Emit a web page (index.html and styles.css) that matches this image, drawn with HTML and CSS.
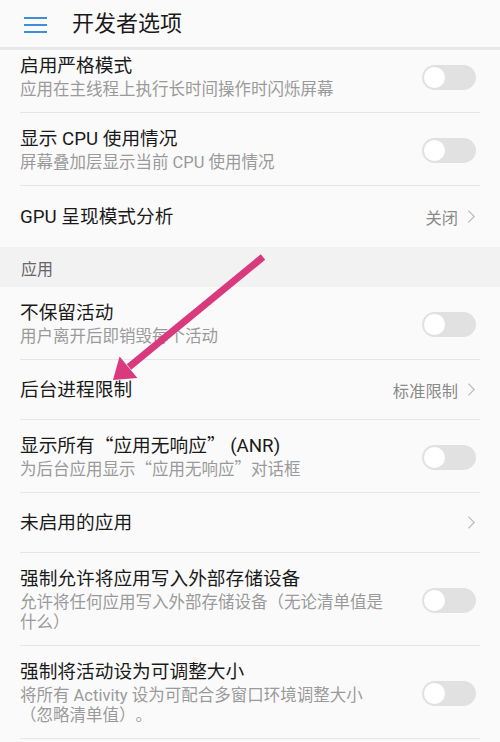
FILE: index.html
```html
<!DOCTYPE html>
<html lang="zh-CN">
<head>
  <meta charset="UTF-8">
  <meta name="viewport" content="width=device-width, initial-scale=1.0">
  <title>开发者选项</title>
  <link rel="stylesheet" href="styles.css">
</head>
<body>
  <div class="screen">
    <header class="topbar">
      <div class="menu-icon">
        <span></span><span></span><span></span>
      </div>
      <h1 class="title">开发者选项</h1>
    </header>

    <div class="content">
      <div class="list">
        <div class="group">
          <div class="item">
            <div class="text">
              <div class="label">启用严格模式</div>
              <div class="summary">应用在主线程上执行长时间操作时闪烁屏幕</div>
            </div>
            <div class="switch"></div>
          </div>
          <div class="item">
            <div class="text">
              <div class="label">显示 CPU 使用情况</div>
              <div class="summary">屏幕叠加层显示当前 CPU 使用情况</div>
            </div>
            <div class="switch"></div>
          </div>
          <div class="item single">
            <div class="text">
              <div class="label">GPU 呈现模式分析</div>
            </div>
            <div class="value">关闭</div>
            <svg class="chevron" viewBox="0 0 10 16"><polyline points="1.5,1.5 8,8 1.5,14.5"/></svg>
          </div>
        </div>

        <div class="section">应用</div>

        <div class="group">
          <div class="item">
            <div class="text">
              <div class="label">不保留活动</div>
              <div class="summary">用户离开后即销毁每个活动</div>
            </div>
            <div class="switch"></div>
          </div>
          <div class="item single">
            <div class="text">
              <div class="label">后台进程限制</div>
            </div>
            <div class="value">标准限制</div>
            <svg class="chevron" viewBox="0 0 10 16"><polyline points="1.5,1.5 8,8 1.5,14.5"/></svg>
          </div>
          <div class="item">
            <div class="text">
              <div class="label">显示所有<span class="cjk">“</span>应用无响应<span class="cjk">”</span> (ANR)</div>
              <div class="summary">为后台应用显示<span class="cjk">“</span>应用无响应<span class="cjk">”</span>对话框</div>
            </div>
            <div class="switch"></div>
          </div>
          <div class="item single">
            <div class="text">
              <div class="label">未启用的应用</div>
            </div>
            <svg class="chevron" viewBox="0 0 10 16"><polyline points="1.5,1.5 8,8 1.5,14.5"/></svg>
          </div>
          <div class="item">
            <div class="text">
              <div class="label">强制允许将应用写入外部存储设备</div>
              <div class="summary">允许将任何应用写入外部存储设备（无论清单值是什么）</div>
            </div>
            <div class="switch"></div>
          </div>
          <div class="item">
            <div class="text">
              <div class="label">强制将活动设为可调整大小</div>
              <div class="summary">将所有 Activity 设为可配合多窗口环境调整大小（忽略清单值）。</div>
            </div>
            <div class="switch"></div>
          </div>
        </div>
      </div>
    </div>

    <!-- annotation arrow drawn over the screenshot -->
    <svg class="arrow" viewBox="0 0 500 742">
      <line x1="263" y1="257" x2="129" y2="367" />
      <polygon points="113,380 119.6,356.5 137.4,378.1" />
    </svg>
  </div>
</body>
</html>
```

FILE: styles.css
```css
body {
  margin: 0;
  background-color: #fafafa;
  font-family: Roboto, "Noto Sans CJK SC", sans-serif;
  color: #1a1a1a;
  text-spacing-trim: space-all;
}
.cjk {
  font-family: "Noto Sans CJK SC", sans-serif;
  line-height: 1;
}
.screen {
  position: relative;
  width: 500px;
  height: 742px;
  overflow: hidden;
}
.topbar {
  display: flex;
  align-items: center;
  height: 47px;
  border-bottom: 3px solid #e8e8e8;
}
.menu-icon {
  display: flex;
  flex-direction: column;
  gap: 5px;
  width: 23px;
  margin-left: 24px;
  margin-top: 2px;
}
.menu-icon span {
  display: block;
  height: 2px;
  background-color: #3f8fd8;
}
.title {
  margin: 0 0 0 25px;
  font-size: 22px;
  font-weight: normal;
  line-height: 30px;
}
.content {
  height: 692px;
  overflow: hidden;
}
.list {
  margin-top: -10px;
}
.item {
  display: flex;
  align-items: center;
  gap: 28px;
  margin: 0 20px;
  padding: 14px 0 12px;
  border-bottom: 1px solid #e6e6e6;
}
.item.single {
  box-sizing: border-box;
  height: 60px;
  padding: 0;
  gap: 0;
}
.group:first-child .item:last-child {
  height: 61px;
  border-bottom: none;
}
.text {
  flex: 1;
  min-width: 0;
}
.label {
  font-size: 18.7px;
  line-height: 24px;
}
.summary {
  margin-top: 2px;
  font-size: 16.5px;
  line-height: 20px;
  color: #9a9a9a;
}
.switch {
  position: relative;
  flex-shrink: 0;
  width: 54px;
  height: 25px;
  margin-right: 4px;
  border-radius: 13px;
  background-color: #e1e1e1;
}
.switch::before {
  content: "";
  position: absolute;
  left: 2px;
  top: 2px;
  width: 21px;
  height: 21px;
  border-radius: 50%;
  background-color: #fff;
}
.value {
  font-size: 16.3px;
  color: #8a8a8a;
  margin-right: 9px;
}
.chevron {
  width: 9px;
  height: 15px;
  margin-right: 4px;
  fill: none;
  stroke: #bdbdbd;
  stroke-width: 1.4;
}
.section {
  box-sizing: border-box;
  height: 40px;
  padding: 12px 20px 0 21px;
  font-size: 16px;
  line-height: 22px;
  color: #666;
  background-color: #f2f2f2;
}
.arrow {
  position: absolute;
  left: 0;
  top: 0;
  width: 500px;
  height: 742px;
  pointer-events: none;
}
.arrow line {
  stroke: #d93a7e;
  stroke-width: 7;
}
.arrow polygon {
  fill: #d93a7e;
}
```
